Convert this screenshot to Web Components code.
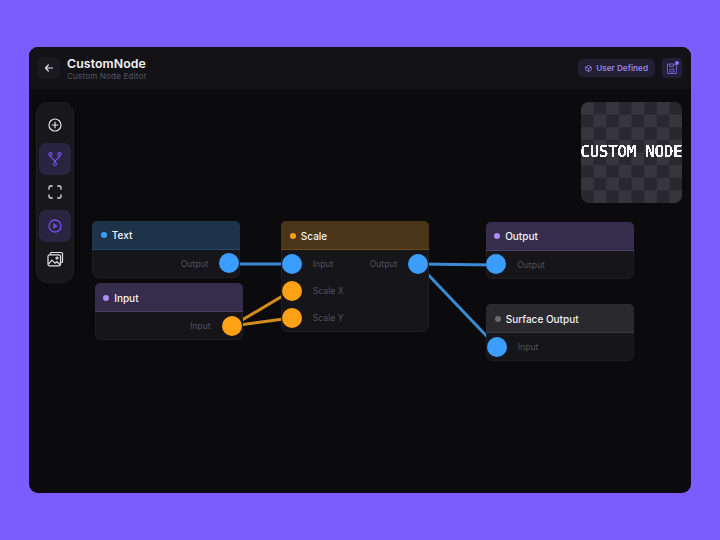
<!DOCTYPE html>
<html>
<head>
<meta charset="utf-8">
<title>CustomNode</title>
<style>
  html, body { margin: 0; height: 100%; }
  body {
    background: #7b5cff;
    display: flex;
    align-items: center;
    justify-content: center;
    font-family: Inter, "Liberation Sans", sans-serif;
  }
</style>
</head>
<body>
<editor-frame>
  <editor-header slot="header"></editor-header>
  <tool-bar slot="canvas"></tool-bar>
  <node-preview slot="canvas"></node-preview>
  <node-wires slot="canvas"></node-wires>
  <graph-node slot="canvas" label="Text" color="#3b9eff" head="#1d3349" line="#24476a" style="left:63.300px;top:131.500px">
    <node-row out="#3b9eff">Output</node-row>
  </graph-node>
  <graph-node slot="canvas" label="Input" color="#b08cf5" head="#352d4b" line="#4a3f66" style="left:65.700px;top:194.300px">
    <node-row out="#ffa114">Input</node-row>
  </graph-node>
  <graph-node slot="canvas" label="Scale" color="#ffa114" head="#4b3519" line="#6a4a1f" style="left:252.300px;top:132px">
    <node-row in="#3b9eff" out="#3b9eff" label2="Output">Input</node-row>
    <node-row in="#ffa114">Scale X</node-row>
    <node-row in="#ffa114">Scale Y</node-row>
  </graph-node>
  <graph-node slot="canvas" label="Output" color="#b08cf5" head="#352d4b" line="#4a3f66" style="left:456.700px;top:132.700px">
    <node-row in="#3b9eff">Output</node-row>
  </graph-node>
  <graph-node slot="canvas" label="Surface Output" color="#6b6b70" head="#29292e" line="#37373c" style="left:457.300px;top:215px">
    <node-row in="#3b9eff">Input</node-row>
  </graph-node>
</editor-frame>

<script>
const frameTemplate = document.createElement('template');
frameTemplate.innerHTML = `
<style>
  :host {
    display: flex;
    flex-direction: column;
    width: 662px;
    height: 446px;
    border-radius: 9px;
    overflow: hidden;
    background: #0b0b0d;
  }
  .canvas { position: relative; flex: 1; }
</style>
<slot name="header"></slot>
<div class="canvas"><slot name="canvas"></slot></div>
`;

class EditorFrame extends HTMLElement {
  constructor() {
    super();
    this.attachShadow({ mode: 'open' }).appendChild(frameTemplate.content.cloneNode(true));
  }
}
customElements.define('editor-frame', EditorFrame);

const headerTemplate = document.createElement('template');
headerTemplate.innerHTML = `
<style>
  :host {
    display: flex;
    align-items: center;
    height: 42px;
    padding: 0 9px 0 9px;
    background: #131317;
    color: #f2f2f4;
  }
  .back {
    width: 22px; height: 22px;
    border-radius: 5px;
    background: #1a1a20;
    display: grid; place-items: center;
    margin-right: 7px;
  }
  .titles { flex: 1; display: flex; flex-direction: column; padding-top: 2px; }
  .name { font-size: 12.3px; font-weight: 600; line-height: 14px; letter-spacing: .1px; }
  .sub { font-size: 8.2px; line-height: 11px; color: #55555f; letter-spacing: .1px; }
  .tag {
    display: flex; align-items: center; gap: 4px;
    height: 18px;
    padding: 0 7px;
    border-radius: 5px;
    background: #231f33;
    color: #9582e8;
    font-size: 8.2px; font-weight: 600;
    margin-right: 7px;
  }
  .save {
    position: relative;
    width: 20px; height: 20px;
    border-radius: 4px;
    background: #231e38;
    display: grid; place-items: center;
  }
  .dot {
    position: absolute; top: 3px; right: 3px;
    width: 4px; height: 4px; border-radius: 50%;
    background: #8f73ff;
  }
</style>
<div class="back">
  <svg width="12" height="12" viewBox="0 0 12 12" fill="none" stroke="#e8e8ec" stroke-width="1.2" stroke-linecap="round" stroke-linejoin="round"><path d="M9.500 6h-7M5.300 3 2.500 6l2.800 3"/></svg>
</div>
<div class="titles">
  <div class="name">CustomNode</div>
  <div class="sub">Custom Node Editor</div>
</div>
<div class="tag">
  <svg width="7" height="7" viewBox="0 0 8 8" fill="none" stroke="#9582e8" stroke-width=".9" stroke-linejoin="round"><path d="M4 .6 7.200 2.200v3.600L4 7.400.8 5.800V2.200zM.8 2.200 4 4l3.200-1.800M4 4v3.400"/></svg>
  User Defined
</div>
<div class="save">
  <svg width="10" height="11" viewBox="0 0 10 11" fill="none" stroke="#7d62e8" stroke-width=".9" stroke-linejoin="round"><path d="M.5 1h7l2 2v7.500H.5zM2.500 1v2.500h4V1"/><rect x="3" y="6" width="4" height="3"/></svg>
  <span class="dot"></span>
</div>
`;

class EditorHeader extends HTMLElement {
  constructor() {
    super();
    this.attachShadow({ mode: 'open' }).appendChild(headerTemplate.content.cloneNode(true));
  }
}
customElements.define('editor-header', EditorHeader);

const toolbarTemplate = document.createElement('template');
toolbarTemplate.innerHTML = `
<style>
  :host {
    position: absolute;
    left: 7px; top: 13px;
    box-sizing: border-box;
    width: 38px; height: 181px;
    padding-top: 6px;
    display: flex; flex-direction: column; align-items: center; gap: 1.500px;
    border-radius: 11px;
    background: #17171c;
    border: 1px solid #1e1e24;
  }
  .tool {
    width: 32px; height: 32px;
    border-radius: 7px;
    display: grid; place-items: center;
  }
  .on { background: #2a2443; }
</style>
<div class="tool">
  <svg width="16" height="16" viewBox="0 0 16 16" fill="none" stroke="#e4e4e8" stroke-width="1.2" stroke-linecap="round"><circle cx="8" cy="8" r="6"/><path d="M8 5.200v5.600M5.200 8h5.600"/></svg>
</div>
<div class="tool on">
  <svg width="16" height="16" viewBox="0 0 16 16" fill="none" stroke="#7553e8" stroke-width="1.200"><circle cx="3.500" cy="3.200" r="1.500"/><circle cx="12.500" cy="3.200" r="1.500"/><circle cx="8" cy="13" r="1.500"/><path d="M3.500 4.700C3.500 8 8 7.500 8 11.500M12.500 4.700C12.500 8 8 7.500 8 11.500"/></svg>
</div>
<div class="tool">
  <svg width="16" height="16" viewBox="0 0 16 16" fill="none" stroke="#dcdce0" stroke-width="1.300" stroke-linecap="round"><path d="M2 5.200V3.500A1.500 1.500 0 0 1 3.500 2h1.700M10.800 2h1.700A1.500 1.500 0 0 1 14 3.500v1.700M14 10.800v1.700a1.500 1.500 0 0 1-1.500 1.500h-1.700M5.200 14H3.500A1.500 1.500 0 0 1 2 12.500v-1.700"/></svg>
</div>
<div class="tool on">
  <svg width="16" height="16" viewBox="0 0 16 16" fill="none" stroke="#6f4fe6" stroke-width="1.300" stroke-linejoin="round"><circle cx="8" cy="8" r="6"/><path d="M6.500 5.600v4.800L10.200 8z" fill="#6f4fe6" stroke-width=".6"/></svg>
</div>
<div class="tool">
  <svg width="17" height="17" viewBox="0 0 17 17" fill="none" stroke="#e4e4e8" stroke-width="1.200" stroke-linejoin="round"><path d="M3.500 3.500V2.500a1 1 0 0 1 1-1h10a1 1 0 0 1 1 1v8a1 1 0 0 1-1 1h-1"/><rect x="1" y="3.800" width="12.500" height="11" rx="1.500"/><path d="M1.500 13 5 9.200l3 3 1.800-1.500 3.300 3"/><circle cx="10" cy="7" r="1"/></svg>
</div>
`;

class ToolBar extends HTMLElement {
  constructor() {
    super();
    this.attachShadow({ mode: 'open' }).appendChild(toolbarTemplate.content.cloneNode(true));
  }
}
customElements.define('tool-bar', ToolBar);

const previewTemplate = document.createElement('template');
previewTemplate.innerHTML = `
<style>
  :host {
    position: absolute;
    left: 552px; top: 13px;
    width: 101px; height: 101px;
    border-radius: 8px;
    overflow: hidden;
    display: flex; align-items: center; justify-content: center;
    background: repeating-conic-gradient(#28282e 0 25%, #36363c 0 50%) 0 0 / 25.250px 25.250px;
  }
  .txt {
    font-family: "DejaVu Sans Mono", "Liberation Mono", monospace;
    font-size: 15.400px;
    color: #f6f6f6;
    white-space: nowrap;
    flex: none;
    margin-top: -1px;
    filter: url(#hard);
  }
  svg { position: absolute; width: 0; height: 0; }
</style>
<svg aria-hidden="true"><filter id="hard" x="0" y="0" width="100%" height="100%" color-interpolation-filters="sRGB"><feComponentTransfer><feFuncA type="discrete" tableValues="0 1 1 1 1"/></feComponentTransfer></filter></svg>
<div class="txt">CUSTOM NODE</div>
`;

class NodePreview extends HTMLElement {
  constructor() {
    super();
    this.attachShadow({ mode: 'open' }).appendChild(previewTemplate.content.cloneNode(true));
  }
}
customElements.define('node-preview', NodePreview);

const wiresTemplate = document.createElement('template');
wiresTemplate.innerHTML = `
<style>
  :host { position: absolute; inset: 0; }
  svg { display: block; }
</style>
<svg width="662" height="404" fill="none" stroke-width="3">
  <g stroke="#3a8ad4">
    <path d="M200 175H262"/>
    <path d="M389 175 467 176"/>
    <path d="M389 175 468 258"/>
  </g>
  <g stroke="#d38d1e">
    <path d="M203 237 262 202"/>
    <path d="M203 237 262 229"/>
  </g>
</svg>
`;

class NodeWires extends HTMLElement {
  constructor() {
    super();
    this.attachShadow({ mode: 'open' }).appendChild(wiresTemplate.content.cloneNode(true));
  }
}
customElements.define('node-wires', NodeWires);

const nodeTemplate = document.createElement('template');
nodeTemplate.innerHTML = `
<style>
  :host {
    position: absolute;
    box-sizing: border-box;
    width: 148px;
    border-radius: 6px;
    background: #15151a;
    border: 1px solid #1e1e23;
    color: #f2f2f4;
  }
  .head {
    display: flex; align-items: center; gap: 5px;
    height: 26.500px;
    padding: 1.500px 0 0 8.500px;
    border-radius: 5px 5px 0 0;
    font-size: 10px; font-weight: 500;
    background: var(--head);
    border-bottom: 1px solid var(--line);
    margin: -1px -1px 0;
  }
  .dot { width: 6px; height: 6px; border-radius: 50%; background: var(--color); }
</style>
<div class="head"><span class="dot"></span><span class="title"></span></div>
<slot></slot>
`;

class GraphNode extends HTMLElement {
  constructor() {
    super();
    this.attachShadow({ mode: 'open' }).appendChild(nodeTemplate.content.cloneNode(true));
  }

  connectedCallback() {
    this.shadowRoot.querySelector('.title').textContent = this.getAttribute('label');
    this.style.setProperty('--color', this.getAttribute('color'));
    this.style.setProperty('--head', this.getAttribute('head'));
    this.style.setProperty('--line', this.getAttribute('line'));
  }
}
customElements.define('graph-node', GraphNode);

const rowTemplate = document.createElement('template');
rowTemplate.innerHTML = `
<style>
  :host {
    display: flex; align-items: center;
    position: relative;
    box-sizing: border-box;
    height: 27px;
    padding-top: 1px;
    font-size: 8.600px;
    color: #52525b;
  }
  .in, .out {
    position: absolute;
    top: 50%;
    width: 20px; height: 20px;
    margin-top: -10px;
    border-radius: 50%;
    display: none;
  }
  .in { left: -0.500px; }
  .out { right: 0; }
  .label { padding-left: 30.500px; }
  .right { margin-left: auto; padding-right: 31px; }
</style>
<span class="in"></span>
<span class="label"><slot></slot></span>
<span class="right"></span>
<span class="out"></span>
`;

class NodeRow extends HTMLElement {
  constructor() {
    super();
    this.attachShadow({ mode: 'open' }).appendChild(rowTemplate.content.cloneNode(true));
  }

  connectedCallback() {
    const root = this.shadowRoot;
    const inColor = this.getAttribute('in');
    const outColor = this.getAttribute('out');
    if (inColor) {
      root.querySelector('.in').style.cssText = `display:block;background:${inColor}`;
    }
    if (outColor) {
      root.querySelector('.out').style.cssText = `display:block;background:${outColor}`;
    }
    // output only rows carry their text on the right
    if (outColor && !inColor) {
      const label = root.querySelector('.label');
      label.style.marginLeft = 'auto';
      label.style.padding = '0 31px 0 0';
      root.querySelector('.right').style.display = 'none';
    }
    if (this.hasAttribute('label2')) {
      root.querySelector('.right').textContent = this.getAttribute('label2');
    }
  }
}
customElements.define('node-row', NodeRow);
</script>
</body>
</html>
